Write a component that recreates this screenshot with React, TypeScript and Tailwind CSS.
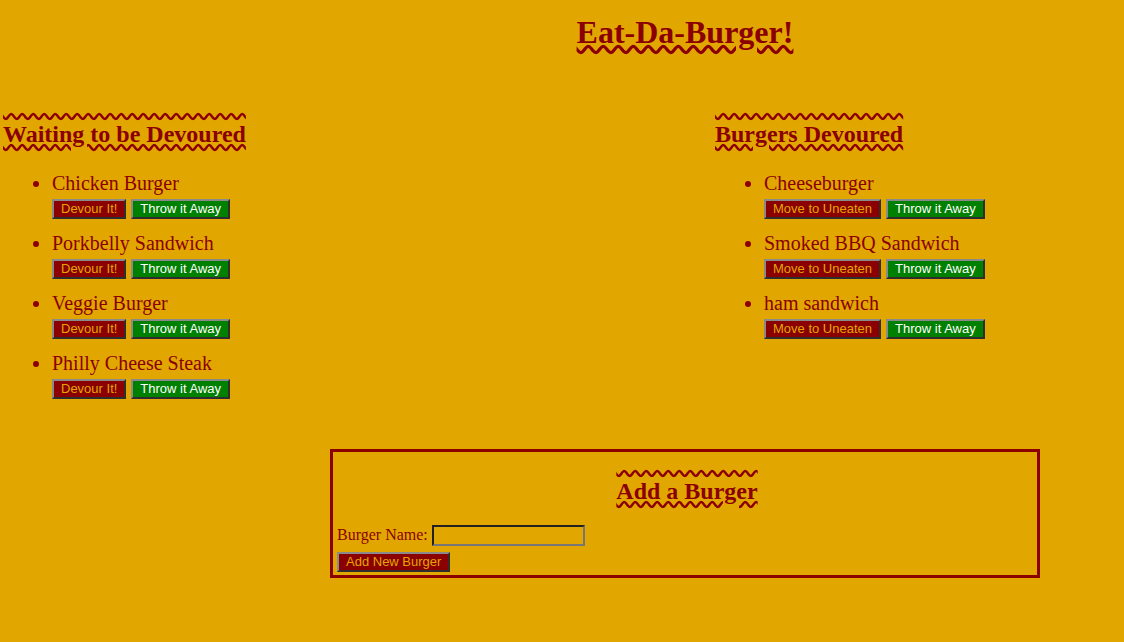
const waiting = ['Chicken Burger', 'Porkbelly Sandwich', 'Veggie Burger', 'Philly Cheese Steak'];
const devoured = ['Cheeseburger', 'Smoked BBQ Sandwich', 'ham sandwich'];

const wavy = '[text-decoration-line:underline_overline] decoration-wavy';
const btn =
  'h-[20px] px-[7px] text-[13px] leading-[14px] font-["Liberation_Sans",Arial,sans-serif] border-2 border-t-[#8a8a8a] border-l-[#8a8a8a] border-r-[#2e2e2e] border-b-[#2e2e2e]';

function BurgerList({ items, first }: { items: string[]; first: string }) {
  return (
    <ul className="mt-[24px] list-disc pl-[49px]">
      {items.map((name) => (
        <li key={name} className="mb-[13px] text-[20px] leading-[23px]">
          {name}
          <div className="mt-[4px] flex gap-[5px]">
            <button className={`${btn} bg-[#8b0000] text-[#e1a700]`}>{first}</button>
            <button className={`${btn} bg-[#008000] text-white`}>Throw it Away</button>
          </div>
        </li>
      ))}
    </ul>
  );
}

export default function App() {
  return (
    <main className='min-h-[642px] bg-[#e1a700] font-["Liberation_Serif","Times_New_Roman",serif] text-[#8b0000]'>
      <div className="ml-[330px] w-[710px] pt-[14px] text-center">
        <h1 className="text-[32px] font-bold leading-[37px] underline decoration-wavy">Eat-Da-Burger!</h1>
      </div>

      <div className="mt-[69px] grid grid-cols-[712px_1fr]">
        <section className="pl-[3px]">
          <h2 className={`text-[24px] font-bold leading-[28px] ${wavy}`}>Waiting to be Devoured</h2>
          <BurgerList items={waiting} first="Devour It!" />
        </section>
        <section className="pl-[3px]">
          <h2 className={`text-[24px] font-bold leading-[28px] ${wavy}`}>Burgers Devoured</h2>
          <BurgerList items={devoured} first="Move to Uneaten" />
        </section>
      </div>

      <div className="ml-[330px] mt-[37px] w-[710px] border-[3px] border-[#8b0000] pb-[2px] pl-[4px] pt-[25px]">
        <h2 className={`text-center text-[24px] font-bold leading-[28px] ${wavy}`}>Add a Burger</h2>
        <div className="mt-[18px] flex items-center gap-[4px] text-[16px]">
          <label htmlFor="burger">Burger Name:</label>
          <input
            id="burger"
            type="text"
            className="h-[21px] w-[153px] border-2 border-t-[#222] border-l-[#222] border-r-[#767676] border-b-[#767676] bg-transparent outline-none"
          />
        </div>
        <button className={`${btn} mt-[5px] bg-[#8b0000] text-[#e1a700]`}>Add New Burger</button>
      </div>
    </main>
  );
}
